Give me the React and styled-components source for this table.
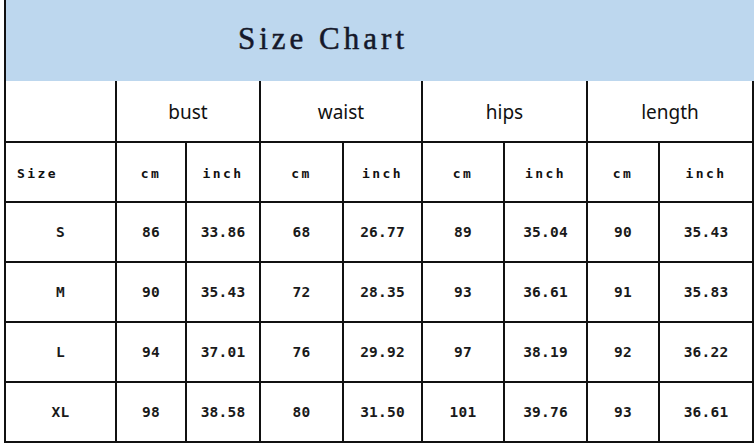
import React from 'react';
import styled, { createGlobalStyle } from 'styled-components';

const GlobalStyle = createGlobalStyle`
  html, body {
    margin: 0;
    padding: 0;
    background: #ffffff;
  }
`;

const columns = [111, 70, 74, 83, 79, 82, 83, 72, 94];

const groups = ['bust', 'waist', 'hips', 'length'];

const rows = [
  { size: 'S', values: ['86', '33.86', '68', '26.77', '89', '35.04', '90', '35.43'] },
  { size: 'M', values: ['90', '35.43', '72', '28.35', '93', '36.61', '91', '35.83'] },
  { size: 'L', values: ['94', '37.01', '76', '29.92', '97', '38.19', '92', '36.22'] },
  { size: 'XL', values: ['98', '38.58', '80', '31.50', '101', '39.76', '93', '36.61'] },
];

function App() {
  return (
    <>
      <GlobalStyle />
      <Chart>
        <Title>Size Chart</Title>
        <Grid>
          <Cell $height={62} />
          {groups.map((name) => (
            <Cell key={name} $height={62} $span={2}>
              <GroupLabel>{name}</GroupLabel>
            </Cell>
          ))}

          <Cell $align="start">
            <UnitLabel>Size</UnitLabel>
          </Cell>
          {groups.map((name) => (
            <React.Fragment key={name}>
              <Cell><UnitLabel>cm</UnitLabel></Cell>
              <Cell><UnitLabel>inch</UnitLabel></Cell>
            </React.Fragment>
          ))}

          {rows.map(({ size, values }) => (
            <React.Fragment key={size}>
              <Cell><Value>{size}</Value></Cell>
              {values.map((v, i) => (
                <Cell key={i}><Value>{v}</Value></Cell>
              ))}
            </React.Fragment>
          ))}
        </Grid>
      </Chart>
    </>
  );
}

const Chart = styled.div`
  width: 750px;
  margin-left: 4px;
  display: flex;
  flex-direction: column;
`;

const Title = styled.div`
  height: 81px;
  box-sizing: border-box;
  background-color: #bdd7ee;
  border-left: 2px solid #111;
  padding-left: 232px;
  padding-bottom: 4px;
  display: flex;
  align-items: center;
  font-family: "Liberation Serif", "DejaVu Serif", serif;
  font-size: 31px;
  letter-spacing: 4px;
  color: #15182a;
  -webkit-text-stroke: 0.5px #15182a;
`;

const Grid = styled.div`
  display: grid;
  grid-template-columns: ${columns.map((w) => `${w}px`).join(' ')};
  border-left: 2px solid #111;
`;

const Cell = styled.div`
  grid-column: span ${(p) => p.$span || 1};
  height: ${(p) => p.$height || 60}px;
  box-sizing: border-box;
  border-right: 2px solid #111;
  border-bottom: 2px solid #111;
  display: flex;
  align-items: center;
  justify-content: ${(p) => (p.$align === 'start' ? 'flex-start' : 'center')};
  padding-left: ${(p) => (p.$align === 'start' ? '11px' : '0')};
`;

const GroupLabel = styled.span`
  font-family: "Noto Sans", "Open Sans", sans-serif;
  font-size: 19px;
  color: #111;
  margin-top: 2px;
`;

const UnitLabel = styled.span`
  font-family: "DejaVu Sans Mono", "Liberation Mono", monospace;
  font-weight: bold;
  font-size: 13px;
  letter-spacing: 2.4px;
  color: #111;
  margin-top: 3px;
`;

const Value = styled.span`
  font-family: "DejaVu Sans Mono", "Liberation Mono", monospace;
  font-weight: bold;
  font-size: 14.5px;
  letter-spacing: 0.2px;
  color: #1a1a1a;
`;

export default App;
